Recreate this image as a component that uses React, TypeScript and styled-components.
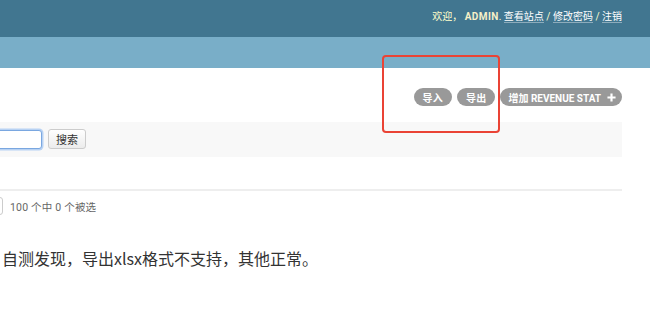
import React from "react";
import styled, { createGlobalStyle } from "styled-components";

const Global = createGlobalStyle`
  html, body { margin: 0; padding: 0; background: #fff; overflow: hidden; }
  body { font-family: Roboto, "Noto Sans CJK SC", "Liberation Sans", sans-serif; color: #333; width: 650px; height: 317px; }
`;

const Page = styled.div`
  position: relative;
  width: 650px;
  height: 317px;
  overflow: hidden;
`;

const Header = styled.header`
  height: 37px;
  background: #417690;
  display: flex;
  align-items: center;
  justify-content: flex-end;
  padding: 0 28px 7px 0;
  box-sizing: border-box;
`;

const UserTools = styled.div`
  font-size: 10px;
  color: #ffc;
  white-space: pre;
`;

const Strong = styled.strong`
  font-weight: 700;
  color: #f5f0c8;
  letter-spacing: 0.4px;
`;

const HeaderLink = styled.a`
  color: #fff;
  text-decoration: none;
  border-bottom: 1px solid rgba(255, 255, 255, 0.4);
`;

const Breadcrumbs = styled.div`
  height: 31px;
  background: #79aec8;
`;

const Main = styled.main`
  margin-left: -20px;
  margin-right: 28px;
  display: flex;
  flex-direction: column;
`;

const ObjectTools = styled.ul`
  list-style: none;
  margin: 20px 0 0;
  padding: 0;
  display: flex;
  justify-content: flex-end;
  gap: 5px;
`;

const ToolButton = styled.li<{ $add?: boolean }>`
  height: 18px;
  border-radius: 9px;
  background: #999;
  color: #fff;
  font-size: 10px;
  font-weight: 700;
  letter-spacing: ${(p) => (p.$add ? "0" : "0.2px")};
  text-transform: uppercase;
  display: flex;
  align-items: center;
  gap: 6px;
  padding: 0 ${(p) => (p.$add ? "6px" : "9px")} 0 ${(p) => (p.$add ? "8px" : "9px")};
`;

const Toolbar = styled.div`
  margin-top: 16px;
  background: #f8f8f8;
  height: 35px;
  display: flex;
  align-items: center;
  gap: 4px;
  padding-bottom: 1px;
  box-sizing: border-box;
`;

const SearchInput = styled.input`
  width: 62px;
  height: 19px;
  box-sizing: border-box;
  border: 1px solid #7aa7e0;
  border-radius: 3px;
  box-shadow: 0 0 0 1.5px #b8d2f3;
  background: #fff;
  outline: none;
`;

const SearchButton = styled.button`
  height: 20px;
  width: 38px;
  border: 1px solid #ccc;
  border-radius: 3px;
  background: linear-gradient(#fff, #ececec);
  font-family: "Noto Sans CJK SC", sans-serif;
  font-size: 11px;
  color: #333;
  padding: 0;
  margin-left: 2px;
`;

const Actions = styled.div`
  margin-top: 32px;
  border-top: 2px solid #eee;
  height: 28px;
  display: flex;
  align-items: center;
  gap: 7px;
`;

const GoButton = styled.span`
  width: 23px;
  height: 18px;
  border: 1px solid #ccc;
  border-radius: 3px;
  box-sizing: border-box;
  margin-top: 2px;
`;

const Counter = styled.span`
  font-size: 10.5px;
  color: #666;
  letter-spacing: 0.2px;
  margin-top: 2px;
`;

const Note = styled.p`
  margin: 27px 0 0 22px;
  font-family: "Noto Sans CJK SC", sans-serif;
  font-size: 16px;
  color: #333;
`;

const Annotation = styled.div`
  position: absolute;
  left: 382px;
  top: 55px;
  width: 118px;
  height: 78px;
  box-sizing: border-box;
  border: 2px solid #ea4335;
  border-radius: 4px;
`;

export default function App() {
  return (
    <Page>
      <Global />
      <Header>
        <UserTools>
          欢迎， <Strong>ADMIN</Strong>. <HeaderLink>查看站点</HeaderLink> /{" "}
          <HeaderLink>修改密码</HeaderLink> / <HeaderLink>注销</HeaderLink>
        </UserTools>
      </Header>
      <Breadcrumbs />
      <Main>
        <ObjectTools>
          <ToolButton>导入</ToolButton>
          <ToolButton>导出</ToolButton>
          <ToolButton $add>
            增加 Revenue Stat
            <svg width="9" height="9" viewBox="0 0 10 10">
              <path d="M5 0.5v9M0.5 5h9" stroke="#fff" strokeWidth="2.4" />
            </svg>
          </ToolButton>
        </ObjectTools>
        <Toolbar>
          <SearchInput />
          <SearchButton>搜索</SearchButton>
        </Toolbar>
        <Actions>
          <GoButton />
          <Counter>100 个中 0 个被选</Counter>
        </Actions>
        <Note>自测发现，导出xlsx格式不支持，其他正常。</Note>
      </Main>
      <Annotation />
    </Page>
  );
}
